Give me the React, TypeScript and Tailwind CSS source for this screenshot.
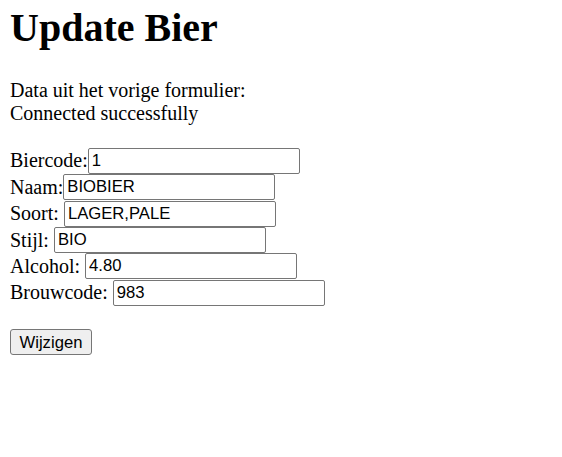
import { useState } from "react";

const FIELDS = [
  { label: "Biercode:", value: "1", gap: false },
  { label: "Naam:", value: "BIOBIER", gap: false },
  { label: "Soort:", value: "LAGER,PALE", gap: true },
  { label: "Stijl:", value: "BIO", gap: true },
  { label: "Alcohol:", value: "4.80", gap: true },
  { label: "Brouwcode:", value: "983", gap: true },
];

export default function App() {
  const [values, setValues] = useState(FIELDS.map((f) => f.value));

  return (
    <div className="min-h-screen bg-white px-[10px] pt-[5px] font-['Liberation_Serif',serif] text-[20px] leading-[23px] text-black">
      <h1 className="text-[40px] font-bold leading-[46px]">Update Bier</h1>
      <p className="mt-[27.7px]">
        Data uit het vorige formulier:
        <br />
        Connected successfully
      </p>
      <form className="mt-[23px]" onSubmit={(e) => e.preventDefault()}>
        {FIELDS.map((f, i) => (
          <div key={f.label} className="flex h-[26.4px] items-center">
            <span className={f.gap ? "mr-[5px]" : ""}>{f.label}</span>
            <input
              className="box-border h-[26px] w-[212px] rounded-[2px] border border-[#767676] px-[3px] font-['Liberation_Sans',Arial,sans-serif] text-[16.67px] leading-[19px] text-black outline-none"
              value={values[i]}
              onChange={(e) =>
                setValues((v) => v.map((x, j) => (j === i ? e.target.value : x)))
              }
            />
          </div>
        ))}
        <button
          type="submit"
          className="mt-[23px] box-border h-[26px] rounded-[3px] border border-[#767676] bg-[#efefef] px-[8.5px] font-['Liberation_Sans',Arial,sans-serif] text-[16.67px] leading-[19px] text-black"
        >
          Wijzigen
        </button>
      </form>
    </div>
  );
}
